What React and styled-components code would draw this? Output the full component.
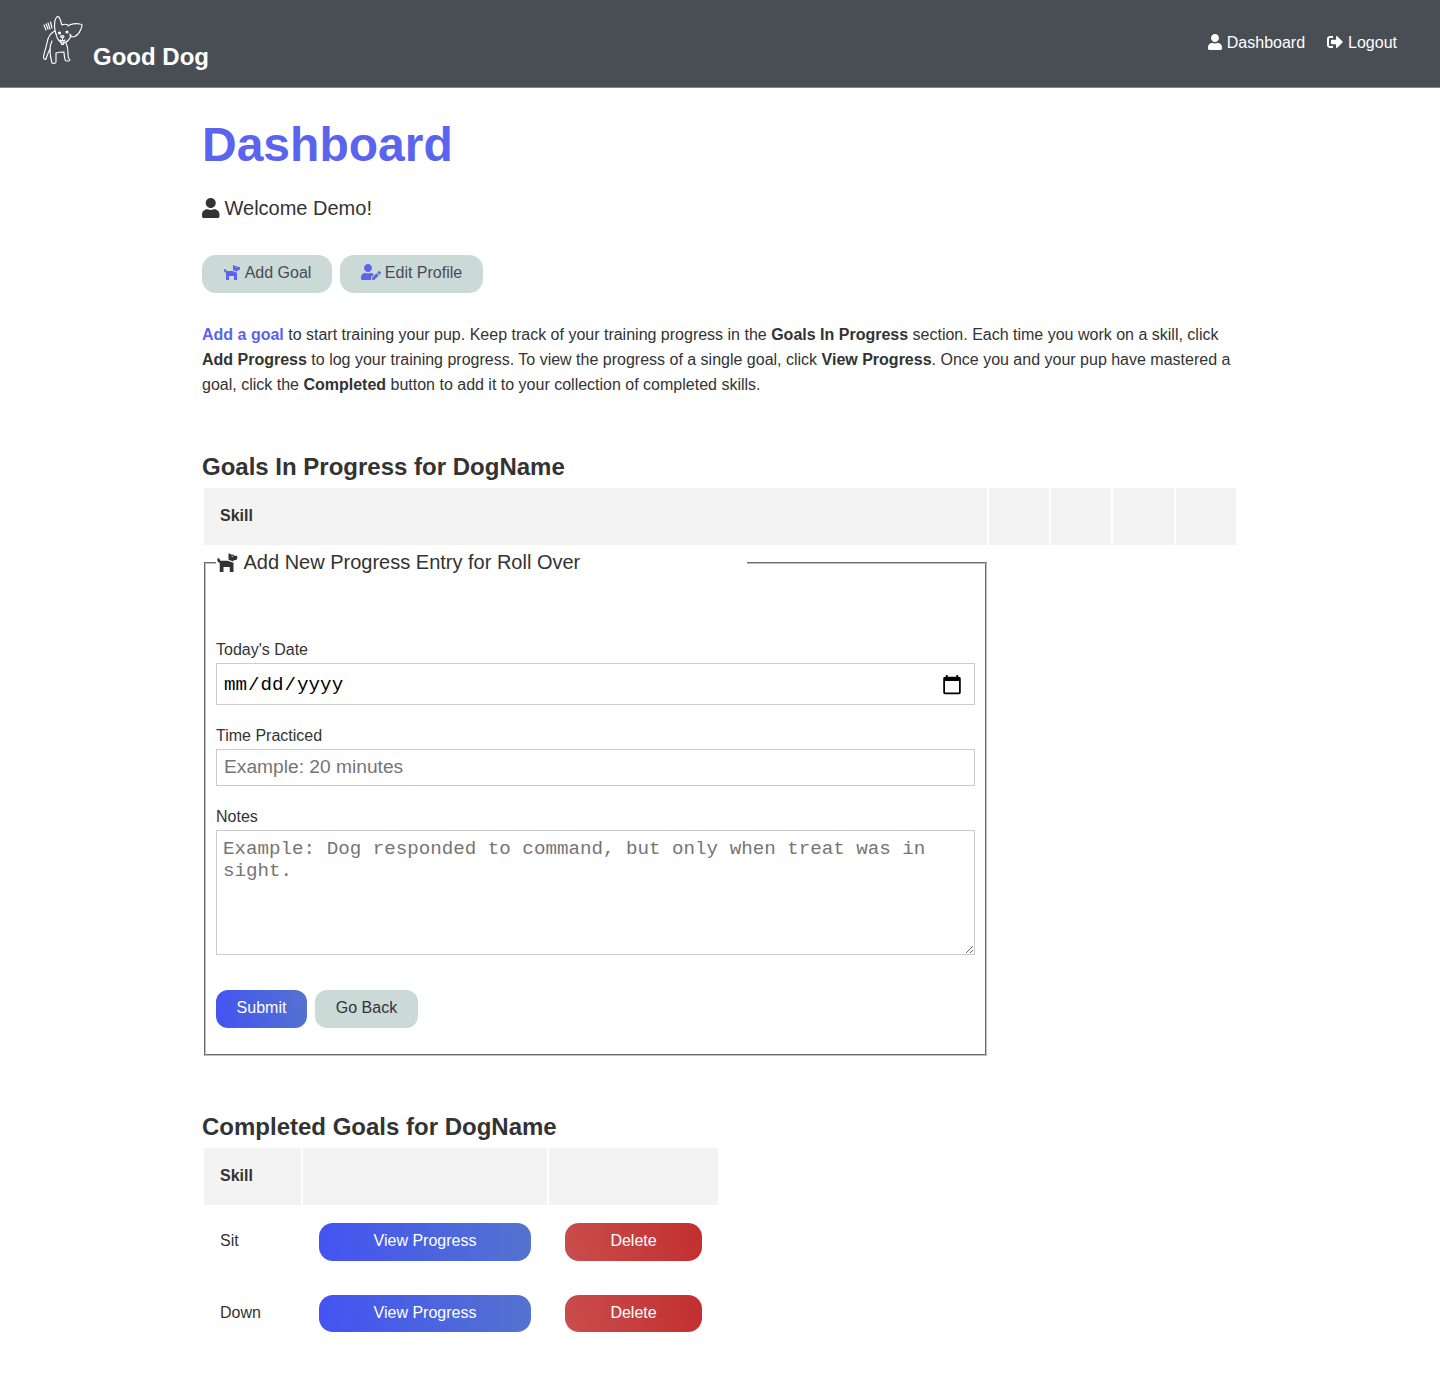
import React from "react";
import styled, { createGlobalStyle } from "styled-components";
import { FaDog, FaSignOutAlt, FaUser, FaUserEdit } from "react-icons/fa";

const GlobalStyle = createGlobalStyle`
  * {
    box-sizing: border-box;
  }
  body {
    margin: 0;
    background: #fff;
    color: #333;
    font-family: "Liberation Sans", Arial, sans-serif;
    font-size: 16px;
    line-height: 25px;
  }
`;

const DogIcon = styled(FaDog)`
  width: 1.125em;
  height: 1em;
  flex-shrink: 0;
`;

const UserIcon = styled(FaUser)`
  width: 0.875em;
  height: 1em;
  flex-shrink: 0;
`;

const EditIcon = styled(FaUserEdit)`
  width: 1.25em;
  height: 1em;
  flex-shrink: 0;
`;

const LogoutIcon = styled(FaSignOutAlt)`
  width: 1em;
  height: 1em;
  flex-shrink: 0;
`;

const Navbar = styled.header`
  height: 88px;
  padding: 0 43px;
  display: flex;
  justify-content: space-between;
  background: #494e55;
  border-bottom: 1px solid #6c86b5;
  color: #fff;
`;

const Brand = styled.a`
  display: flex;
  align-items: flex-start;
  gap: 10px;
  padding-top: 15px;
  font-size: 24px;
  font-weight: bold;
  color: #fff;
  span {
    margin-top: 27px;
    line-height: 30px;
  }
`;

const NavLinks = styled.nav`
  display: flex;
  gap: 22px;
  padding-top: 29px;
`;

const NavLink = styled.a`
  display: flex;
  align-items: center;
  gap: 5px;
  height: 26px;
  color: #fff;
`;

const Main = styled.main`
  width: 1036px;
  margin-left: 202px;
`;

const Title = styled.h1`
  margin: 27px 0 0;
  font-size: 48px;
  line-height: 60px;
  font-weight: bold;
  color: #5a64ee;
`;

const Welcome = styled.p`
  margin: 19px 0 0;
  display: flex;
  align-items: center;
  gap: 5px;
  font-size: 20px;
  line-height: 28px;
`;

const ButtonRow = styled.div`
  display: flex;
  gap: 8px;
  margin-top: ${(p) => p.$top}px;
`;

const Button = styled.button`
  display: inline-flex;
  align-items: center;
  justify-content: center;
  gap: 4px;
  height: ${(p) => p.$height || 38}px;
  padding: 0 20px ${(p) => p.$lift ?? 4}px;
  border: 0;
  border-radius: ${(p) => p.$radius || 14}px;
  font: 16px/25px "Liberation Sans", Arial, sans-serif;
  white-space: nowrap;
  color: ${(p) => p.$text || "#fff"};
  background: ${(p) => p.$bg};
  width: ${(p) => (p.$width ? `${p.$width}px` : "auto")};
  vertical-align: top;
  svg {
    color: #5a64ee;
  }
`;

const Intro = styled.p`
  margin: 29px 0 0;
  a {
    color: #5a64ee;
    font-weight: bold;
  }
`;

const SectionTitle = styled.h2`
  margin: ${(p) => p.$top}px 0 0;
  font-size: 24px;
  line-height: 30px;
  font-weight: bold;
`;

const Table = styled.table`
  border-collapse: separate;
  border-spacing: 2px;
  table-layout: fixed;
  width: ${(p) => p.$width}px;
  margin-top: 4px;
`;

const HeadCell = styled.th`
  height: 57px;
  padding: 0 16px 2px;
  background: #f3f3f3;
  text-align: left;
  font-weight: bold;
`;

const Cell = styled.td`
  padding: 16px;
  vertical-align: middle;
`;

const NameCell = styled(Cell)`
  padding: 15px 16px 17px;
`;

const FormCell = styled.td`
  padding: 0;
  vertical-align: top;
`;

const Fieldset = styled.fieldset`
  margin: 1px 0 0;
  padding: 0 10px 26px;
  width: 783px;
  height: 508px;
  border: 2px groove #c0c0c0;
`;

const Legend = styled.legend`
  display: flex;
  align-items: center;
  gap: 5px;
  width: 531px;
  padding: 0 0 2px;
  font-size: 20px;
  line-height: 28px;
`;

const FormBody = styled.div`
  padding-top: 59px;
`;

const Label = styled.label`
  display: block;
  margin-top: ${(p) => p.$top || 0}px;
  margin-bottom: 1px;
  line-height: 25px;
`;

const DateInput = styled.input`
  display: block;
  width: 759px;
  height: 42px;
  padding: 2px 6px 0;
  border: 1px solid #ccc;
  border-radius: 0;
  background: #fff;
  color: #000;
  font: 19.2px "Liberation Mono", "Courier New", monospace;
  &::-webkit-calendar-picker-indicator {
    width: 22px;
    height: 22px;
    margin-right: 5px;
    padding: 0;
  }
`;

const TextInput = styled.input`
  display: block;
  width: 759px;
  height: 37px;
  padding: 0 7px 2px;
  border: 1px solid #ccc;
  border-radius: 0;
  font: 19.2px "Liberation Sans", Arial, sans-serif;
  &::placeholder {
    color: #757575;
    opacity: 1;
  }
`;

const TextArea = styled.textarea`
  display: block;
  width: 759px;
  height: 125px;
  padding: 7px 6px;
  border: 1px solid #ccc;
  border-radius: 0;
  font: 19.2px/22px "Liberation Mono", "Courier New", monospace;
  &::placeholder {
    color: #757575;
    opacity: 1;
  }
`;

const blue = "linear-gradient(80deg, #4353f2, #5473cf)";
const red = "linear-gradient(80deg, #c94d4d, #c22f2f)";
const sage = "#cbdad6";

const goals = ["Sit", "Down"];

export default function App() {
  return (
    <>
      <GlobalStyle />
      <Navbar>
        <Brand>
          <DogLogo />
          <span>Good Dog</span>
        </Brand>
        <NavLinks>
          <NavLink>
            <UserIcon />
            Dashboard
          </NavLink>
          <NavLink>
            <LogoutIcon />
            Logout
          </NavLink>
        </NavLinks>
      </Navbar>
      <Main>
        <Title>Dashboard</Title>
        <Welcome>
          <UserIcon />
          Welcome Demo!
        </Welcome>
        <ButtonRow $top={33}>
          <Button $bg={sage} $text="#454b5b" $width={130}>
            <DogIcon />
            Add Goal
          </Button>
          <Button $bg={sage} $text="#454b5b" $width={143}>
            <EditIcon />
            Edit Profile
          </Button>
        </ButtonRow>
        <Intro>
          <a>Add a goal</a> to start training your pup. Keep track of your
          training progress in the <b>Goals In Progress</b> section. Each time
          you work on a skill, click <b>Add Progress</b> to log your training
          progress. To view the progress of a single goal, click{" "}
          <b>View Progress</b>. Once you and your pup have mastered a goal,
          click the <b>Completed</b> button to add it to your collection of
          completed skills.
        </Intro>

        <SectionTitle $top={55}>Goals In Progress for DogName</SectionTitle>
        <Table $width={1036}>
          <colgroup>
            <col style={{ width: 783 }} />
            <col style={{ width: 60 }} />
            <col style={{ width: 60 }} />
            <col style={{ width: 61 }} />
            <col style={{ width: 60 }} />
          </colgroup>
          <thead>
            <tr>
              <HeadCell>Skill</HeadCell>
              <HeadCell />
              <HeadCell />
              <HeadCell />
              <HeadCell />
            </tr>
          </thead>
          <tbody>
            <tr>
              <FormCell>
                <Fieldset>
                  <Legend>
                    <DogIcon />
                    Add New Progress Entry for Roll Over
                  </Legend>
                  <FormBody>
                    <Label htmlFor="date">Today's Date</Label>
                    <DateInput id="date" type="date" />
                    <Label htmlFor="time" $top={18}>
                      Time Practiced
                    </Label>
                    <TextInput id="time" placeholder="Example: 20 minutes" />
                    <Label htmlFor="notes" $top={18}>
                      Notes
                    </Label>
                    <TextArea
                      id="notes"
                      placeholder="Example: Dog responded to command, but only when treat was in sight."
                    />
                    <ButtonRow $top={35}>
                      <Button $bg={blue} $width={91} $radius={12}>
                        Submit
                      </Button>
                      <Button $bg={sage} $text="#333" $width={103} $radius={12}>
                        Go Back
                      </Button>
                    </ButtonRow>
                  </FormBody>
                </Fieldset>
              </FormCell>
            </tr>
          </tbody>
        </Table>

        <SectionTitle $top={54}>Completed Goals for DogName</SectionTitle>
        <Table $width={518}>
          <colgroup>
            <col style={{ width: 97 }} />
            <col style={{ width: 244 }} />
            <col style={{ width: 169 }} />
          </colgroup>
          <thead>
            <tr>
              <HeadCell>Skill</HeadCell>
              <HeadCell />
              <HeadCell />
            </tr>
          </thead>
          <tbody>
            {goals.map((goal) => (
              <tr key={goal}>
                <NameCell>{goal}</NameCell>
                <Cell>
                  <Button $bg={blue} $width={212} $height={37.6} $lift={2}>
                    View Progress
                  </Button>
                </Cell>
                <Cell>
                  <Button $bg={red} $width={137} $height={37.6} $lift={2}>
                    Delete
                  </Button>
                </Cell>
              </tr>
            ))}
          </tbody>
        </Table>
      </Main>
    </>
  );
}

function DogLogo() {
  return (
    <svg width="40" height="50" viewBox="0 0 40 50" fill="none" stroke="#fff" strokeWidth="1.15" strokeLinecap="round" strokeLinejoin="round">
      <path d="M1 10l2 5M3 9l2 5M5 8l2 6M7.500 7l1.500 6" />
      <path d="M13 19C11 14 11 6 13 3c1-2 3-2 4 1 1 2 1 4 2 6 2-1 4-1 6 0" />
      <path d="M25 11c2-2 8-3 12-2 3 0 2 2 1 5-2 5-5 8-9 8-2 0-2-2-2-3" />
      <path d="M13 19c1 5 4 9 7 9 4 0 7-4 8-8" />
      <circle cx="16.500" cy="18" r="1" fill="#fff" />
      <circle cx="24" cy="17" r="1" fill="#fff" />
      <path d="M17.500 21.500c1-1 2.500-1 3.500 0l-1.500 1.500zM19.500 23v2M17 25c1 1 4 1 5 0M18 26.500l.5 3 2 0 .5-3" />
      <path d="M12 16c-5 2-7 6-8 12-1 5-3 10-3.500 14 0 2 1.500 3 2.500 2 1-4 3-8 4-10 0 6 1 11 2 14 2 1 4 0 4-1l0-9c3-1 6-1 8-1 0 4 1 6 1 8 1 1.500 4 1.500 5 0-2-1-2-3-2-7 0-4-1-8-2-10" />
      <path d="M7 34c0-3 1-6 2-8" />
    </svg>
  );
}
